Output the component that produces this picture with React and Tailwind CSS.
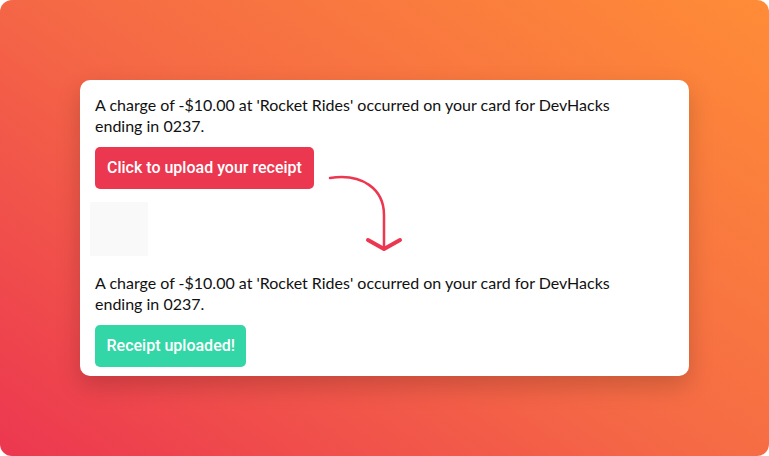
import React from 'react';

const Charge = () => (
  <p className="text-[16px] leading-[21px] text-[#111]">
    A charge of -$10.00 at 'Rocket Rides' occurred on your card for DevHacks ending in 0237.
  </p>
);

const App = () => {
  return (
    <div className="w-[769px] h-[456px] bg-white">
      <div
        className="w-full h-full rounded-[12px] bg-[linear-gradient(35deg,#ec3750_0%,#f56a45_50%,#ff8c37_100%)] flex items-center justify-center"
        style={{ fontFamily: 'Lato, sans-serif' }}
      >
        <div className="relative w-[609px] bg-white rounded-[10px] shadow-[0_10px_24px_rgba(0,0,0,0.18)] pl-[15px] pr-[60px] pt-[14px] pb-[9px]">
          <Charge />
          <button
            className="mt-[11px] h-[42px] px-[12px] rounded-[5px] bg-[#ec3750] text-white text-[16px] font-medium"
            style={{ fontFamily: 'Roboto, sans-serif' }}
          >
            Click to upload your receipt
          </button>
          <div className="-ml-[5px] mt-[13px] w-[58px] h-[54px] bg-[#f9f9f9]" />
          <div className="mt-[16px]">
            <Charge />
          </div>
          <button
            className="mt-[11px] h-[42px] px-[11.5px] rounded-[5px] bg-[#33d6a6] text-white text-[16px] font-medium"
            style={{ fontFamily: 'Roboto, sans-serif' }}
          >
            Receipt uploaded!
          </button>
          <svg
            className="absolute left-[248px] top-[95px]"
            width="76"
            height="80"
            viewBox="0 0 76 80"
            fill="none"
            stroke="#ec3750"
            strokeLinecap="round"
            strokeLinejoin="round"
          >
            <path d="M2 3 C 34 -2, 56 14, 56 40 L 56 73" strokeWidth="2.5" />
            <path d="M40 65 L56 74 L72 65" strokeWidth="4" />
          </svg>
        </div>
      </div>
    </div>
  );
};

export default App;
